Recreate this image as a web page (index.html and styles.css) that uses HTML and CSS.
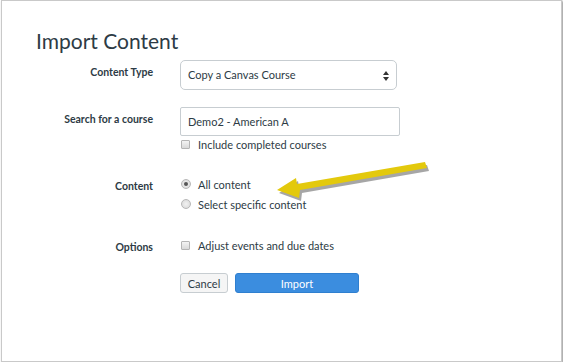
FILE: index.html
```html
<!DOCTYPE html>
<html lang="en">
<head>
  <meta charset="UTF-8">
  <title>Import Content</title>
  <link rel="stylesheet" href="styles.css">
</head>
<body>
  <div class="panel">
    <h1 class="page-title">Import Content</h1>

    <div class="form-row row-type">
      <label class="control-label">Content Type</label>
      <div class="select-box">
        <span>Copy a Canvas Course</span>
        <svg class="select-arrows" width="6" height="10" viewBox="0 0 6 10">
          <path d="M3 0 L6 4 L0 4 Z" fill="#333"/>
          <path d="M3 10 L6 6 L0 6 Z" fill="#333"/>
        </svg>
      </div>
    </div>

    <div class="form-row row-search">
      <label class="control-label">Search for a course</label>
      <div class="controls">
        <div class="text-input">Demo2 - American A</div>
        <div class="check-line"><span class="checkbox"></span>Include completed courses</div>
      </div>
    </div>

    <div class="form-row row-content">
      <label class="control-label">Content</label>
      <div class="controls">
        <div class="check-line"><span class="radio checked"></span>All content</div>
        <div class="check-line"><span class="radio"></span>Select specific content</div>
      </div>
    </div>

    <div class="form-row row-options">
      <label class="control-label">Options</label>
      <div class="controls">
        <div class="check-line"><span class="checkbox"></span>Adjust events and due dates</div>
      </div>
    </div>

    <div class="form-row row-actions">
      <span></span>
      <div class="button-bar">
        <button class="btn">Cancel</button>
        <button class="btn btn-primary">Import</button>
      </div>
    </div>

    <!-- annotation arrow -->
    <svg class="callout" width="563" height="364" viewBox="0 0 563 364">
      <g transform="translate(2,3)" fill="rgba(0,0,0,0.35)">
        <path d="M425 162 L427 168 L300 190 L299 198 L277 190 L296 178 L297 184 Z"/>
      </g>
      <path d="M425 162 L427 168 L300 190 L299 198 L277 190 L296 178 L297 184 Z" fill="#e3c90c"/>
    </svg>
  </div>
</body>
</html>
```

FILE: styles.css
```css
body {
  margin: 0;
  background: #fff;
  font-family: Lato, "Open Sans", sans-serif;
  color: #2d3b45;
}
.panel {
  position: relative;
  margin-left: 1px;
  width: 559px;
  height: 360px;
  border: 1px solid #c9c9c9;
  box-shadow: 1px 1px 2px rgba(0, 0, 0, 0.45);
  background: #fff;
}
.page-title {
  margin: 26px 0 0 34px;
  font-size: 21px;
  font-weight: 400;
  line-height: 28px;
}
.form-row {
  display: grid;
  grid-template-columns: 151px 1fr;
  column-gap: 27px;
}
.control-label {
  text-align: right;
  font-size: 10.5px;
  font-weight: 700;
  line-height: 14px;
  padding-top: 5px;
}
.row-type { margin-top: 5px; }
.row-search { margin-top: 17px; }
.row-content { margin-top: 21px; }
.row-options { margin-top: 21px; }
.row-actions { margin-top: 18px; }

.select-box {
  position: relative;
  height: 28px;
  border: 1px solid #c7cdd1;
  border-radius: 5px;
  font-size: 11px;
  line-height: 28px;
  padding-left: 7px;
  width: 208px;
}
.select-arrows {
  position: absolute;
  right: 7px;
  top: 10px;
}
.text-input {
  width: 211px;
  height: 27px;
  border: 1px solid #c7cdd1;
  border-radius: 2px;
  font-size: 11px;
  line-height: 27px;
  padding-left: 7px;
}
.check-line {
  display: flex;
  align-items: center;
  height: 20px;
  font-size: 11px;
}
.row-search .check-line { height: 17px; }
.checkbox {
  width: 7px;
  height: 7px;
  margin: 0 8px 0 1px;
  border: 1px solid #b5b5b5;
  border-radius: 1px;
  background: linear-gradient(#f4f4f4, #d9d9d9);
}
.radio {
  width: 8px;
  height: 8px;
  margin: 0 7px 0 1px;
  border: 1px solid #b8b8b8;
  border-radius: 50%;
  background: radial-gradient(#f2f2f2, #d6d6d6);
  position: relative;
}
.radio.checked::after {
  content: "";
  position: absolute;
  left: 2px;
  top: 2px;
  width: 4px;
  height: 4px;
  border-radius: 50%;
  background: #555;
}
.button-bar {
  display: flex;
  gap: 7px;
}
.btn {
  width: 48px;
  height: 20px;
  padding: 0;
  font-family: Lato, "Open Sans", sans-serif;
  font-size: 11px;
  color: #2d3b45;
  background: #f5f5f5;
  border: 1px solid #c7cdd1;
  border-radius: 3px;
}
.btn-primary {
  width: 124px;
  color: #fff;
  background: #3b8ddf;
  border-color: #2f7fcf;
}
.callout {
  position: absolute;
  left: -2px;
  top: -1px;
  pointer-events: none;
}
```
